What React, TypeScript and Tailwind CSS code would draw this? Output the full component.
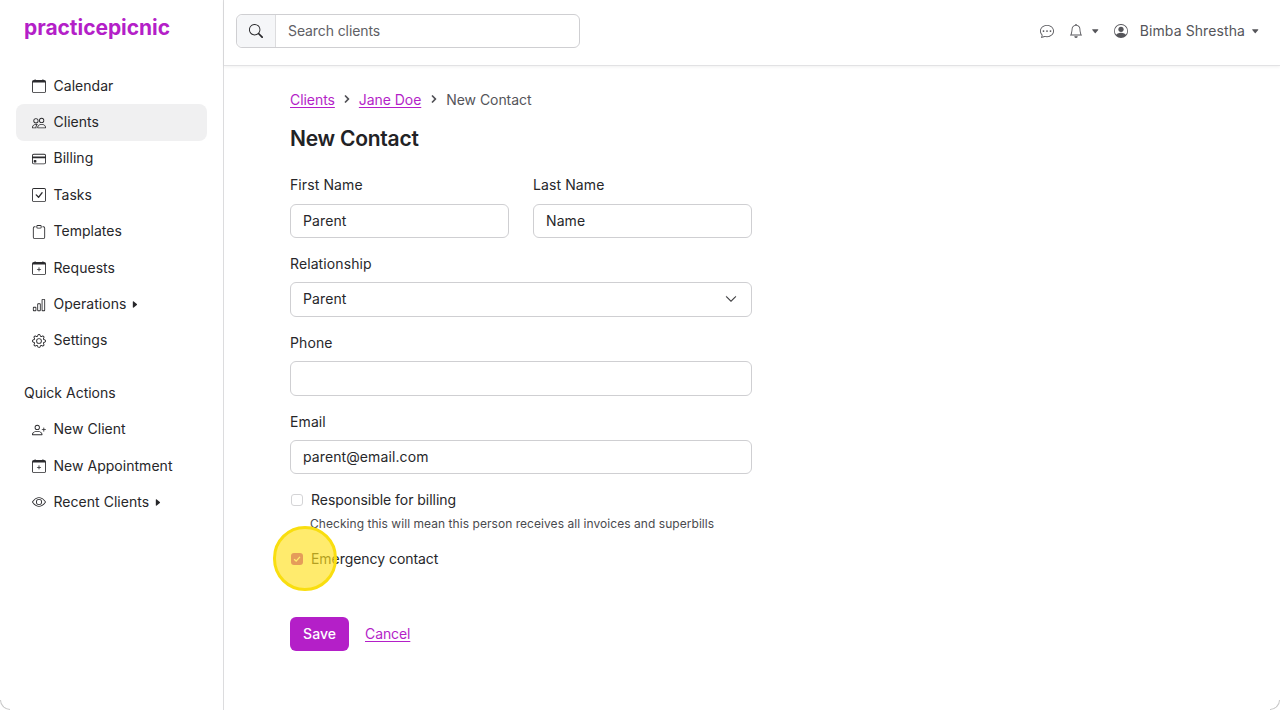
import React from "react";
import {
  BsCalendar, BsPeople, BsCreditCard, BsCheckSquare, BsClipboard, BsCalendarPlus, BsBarChart, BsGear,
  BsPersonPlus, BsEye, BsChatDots, BsBell, BsPersonCircle, BsSearch, BsCaretRightFill, BsCaretDownFill,
  BsChevronDown, BsChevronRight,
} from "react-icons/bs";

const font = "font-['Inter','Noto_Sans',sans-serif]";

function NavItem({ icon: Icon, label, active, caret }: { icon: any; label: string; active?: boolean; caret?: boolean }) {
  return (
    <div className={`flex h-[36.4px] items-center rounded-lg pl-[16px] ${active ? "bg-[#f0f0f1]" : ""}`}>
      <Icon className="h-[14px] w-[14px] text-[#2b2b2e]" />
      <span className="ml-[7.5px] pb-[2px] text-[14px] tracking-[0.03px] text-[#27272a]">{label}</span>
      {caret && <BsCaretRightFill className="ml-[4px] h-[9px] w-[9px] text-[#27272a]" />}
    </div>
  );
}

function Field({ label, value, className = "" }: { label: string; value?: string; className?: string }) {
  return (
    <div className={className}>
      <div className="h-[19px] text-[14px] leading-[19px] tracking-[0.1px] text-[#27272a]">{label}</div>
      <div className="mt-[10px] flex h-[34px] items-center rounded-md border border-[#cfcfd2] bg-white px-[12px] pb-[1px] text-[14px] tracking-[0.1px] text-[#27272a]">
        {value}
      </div>
    </div>
  );
}

export default function App() {
  return (
    <div className={`${font} relative flex h-[710px] w-[1280px] overflow-hidden bg-white`}>
      <aside className="w-[224px] shrink-0 border-r border-[#dcdcde] px-[16px]">
        <div className="ml-[8px] mt-[15px] h-[26px] text-[21px] font-bold leading-[26px] tracking-[-0.05px] text-[#b41fc8]">practicepicnic</div>
        <nav className="mt-[27px]">
          <NavItem icon={BsCalendar} label="Calendar" />
          <NavItem icon={BsPeople} label="Clients" active />
          <NavItem icon={BsCreditCard} label="Billing" />
          <NavItem icon={BsCheckSquare} label="Tasks" />
          <NavItem icon={BsClipboard} label="Templates" />
          <NavItem icon={BsCalendarPlus} label="Requests" />
          <NavItem icon={BsBarChart} label="Operations" caret />
          <NavItem icon={BsGear} label="Settings" />
        </nav>
        <div className="ml-[8px] mt-[23px] h-[22px] text-[14px] leading-[22px] text-[#27272a]">Quick Actions</div>
        <div className="mt-[7.4px]">
          <NavItem icon={BsPersonPlus} label="New Client" />
          <NavItem icon={BsCalendarPlus} label="New Appointment" />
          <NavItem icon={BsEye} label="Recent Clients" caret />
        </div>
      </aside>
      <div className="min-w-0 flex-1">
        <header className="flex h-[66px] items-center justify-between border-b border-[#e2e2e4] pb-[3px] pl-[12px] pr-[21px] shadow-[0_1px_3px_rgba(0,0,0,0.06)]">
          <div className="flex h-[34px] w-[344px] rounded-md border border-[#cfcfd2]">
            <div className="flex w-[39px] items-center justify-center rounded-l-md border-r border-[#dcdcde] bg-[#f5f6f8]">
              <BsSearch className="h-[14px] w-[14px] text-[#27272a]" />
            </div>
            <div className="flex flex-1 items-center pb-[2px] pl-[12px] text-[14px] tracking-[-0.1px] text-[#606065]">Search clients</div>
          </div>
          <div className="flex items-center text-[14px] tracking-[0.1px] text-[#55555a]">
            <BsChatDots className="h-[14px] w-[14px]" />
            <BsBell className="ml-[15px] h-[14px] w-[14px]" />
            <BsCaretDownFill className="ml-[8px] h-[8.5px] w-[8.5px]" />
            <BsPersonCircle className="ml-[14.5px] h-[14px] w-[14px]" />
            <span className="ml-[12px] pb-[2px]">Bimba Shrestha</span>
            <BsCaretDownFill className="ml-[5.5px] h-[8.5px] w-[8.5px]" />
          </div>
        </header>
        <main className="ml-[66px] w-[462px] pt-[24px]">
          <div className="flex h-[20px] items-center pb-[2px] text-[14px] tracking-[-0.06px]">
            <span className="text-[#b41fc8] underline underline-offset-2">Clients</span>
            <BsChevronRight className="mx-[8px] h-[8px] w-[8px] stroke-[2.5] text-[#55555a]" />
            <span className="text-[#b41fc8] underline underline-offset-2">Jane Doe</span>
            <BsChevronRight className="mx-[8.5px] h-[8px] w-[8px] stroke-[2.5] text-[#55555a]" />
            <span className="text-[#55555a]">New Contact</span>
          </div>
          <h1 className="mt-[14px] h-[30px] text-[21px] font-semibold leading-[30px] tracking-[-0.25px] text-[#222225]">New Contact</h1>
          <div className="mt-[21px] flex gap-[24px]">
            <Field label="First Name" value="Parent" className="w-[219px]" />
            <Field label="Last Name" value="Name" className="w-[219px]" />
          </div>
          <div className="mt-[16px]">
            <div className="h-[19px] text-[14px] leading-[19px] tracking-[0.1px] text-[#27272a]">Relationship</div>
            <div className="mt-[9px] flex h-[35px] items-center justify-between rounded-md border border-[#cfcfd2] pb-[1px] pl-[12px] pr-[14px] text-[14px] tracking-[0.1px] text-[#27272a]">
              <span className="pb-[1px]">Parent</span>
              <BsChevronDown className="h-[12px] w-[12px] stroke-[0.5] text-[#27272a]" />
            </div>
          </div>
          <Field label="Phone" className="mt-[16px] [&>div:last-child]:mt-[9px] [&>div:last-child]:h-[35px]" />
          <Field label="Email" value="parent@email.com" className="mt-[16px] [&>div:last-child]:mt-[9px]" />
          <div className="mt-[16px] flex h-[20px] items-center">
            <span className="ml-[1px] h-[12px] w-[12px] rounded-[3px] border border-[#d4d4d6] bg-white" />
            <span className="ml-[8px] pb-[2px] text-[14px] tracking-[-0.03px] text-[#27272a]">Responsible for billing</span>
          </div>
          <div className="ml-[20px] mt-[5px] h-[18px] text-[12px] leading-[18px] tracking-[0.05px] text-[#4a4a4e]">Checking this will mean this person receives all invoices and superbills</div>
          <div className="mt-[16px] flex h-[20px] items-center">
            <span className="ml-[1px] flex h-[12px] w-[12px] items-center justify-center rounded-[3px] bg-[#b41fc8]">
              <svg viewBox="0 0 12 12" className="h-[10px] w-[10px]"><path d="M2.5 6.2 5 8.5 9.5 3.5" fill="none" stroke="white" strokeWidth="1.6" /></svg>
            </span>
            <span className="ml-[8px] pb-[2px] text-[14px] tracking-[-0.05px] text-[#27272a]">Emergency contact</span>
          </div>
          <div className="mt-[48px] flex items-center">
            <div className="flex h-[34px] w-[59px] items-center justify-center rounded-md bg-[#b41fc8] pb-[1px] text-[14px] font-medium text-white">Save</div>
            <span className="ml-[16px] pb-[1px] text-[14px] tracking-[-0.1px] text-[#b41fc8] underline underline-offset-2">Cancel</span>
          </div>
        </main>
      </div>
      <div className="pointer-events-none absolute left-[273px] top-[526px] h-[65px] w-[64px] rounded-full border-[3px] border-[#f9de0f] bg-[#ffe11f]/65" />
      <div className="pointer-events-none absolute bottom-0 left-0 h-[10px] w-[10px] rounded-bl-[10px] border-b border-l border-[#c8c8c8]" />
      <div className="pointer-events-none absolute bottom-0 right-0 h-[10px] w-[10px] rounded-br-[10px] border-b border-r border-[#c8c8c8]" />
    </div>
  );
}
